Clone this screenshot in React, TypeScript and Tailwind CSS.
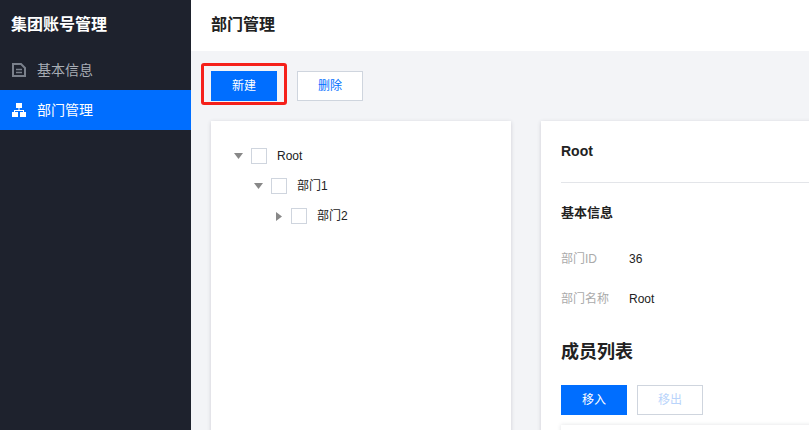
const font = '[font-family:"Liberation_Sans","Noto_Sans_CJK_SC",sans-serif]';

function Tree({ label, open, indent }: { label: string; open: boolean; indent: string }) {
  return (
    <div className={`flex h-[30px] items-center ${indent}`}>
      <span className="flex w-[17px] items-center">
        {open ? (
          <svg width="9" height="6" viewBox="0 0 9 6"><path d="M0 0h9L4.5 6z" fill="#888" /></svg>
        ) : (
          <svg width="6" height="9" viewBox="0 0 6 9" className="ml-[2px]"><path d="M0 0v9l6-4.5z" fill="#888" /></svg>
        )}
      </span>
      <span className="h-4 w-4 border border-[#cfd5de] bg-white" />
      <span className="ml-[10px] text-xs text-[#222]">{label}</span>
    </div>
  );
}

export default function App() {
  return (
    <div className={`relative flex h-[430px] w-[809px] overflow-hidden bg-[#f3f4f7] ${font}`}>
      {/* sidebar */}
      <aside className="w-[191px] shrink-0 bg-[#1e222d]">
        <div className="flex h-[50px] items-center pl-[11px] text-base font-bold text-white">集团账号管理</div>
        <div className="flex h-10 items-center pl-3 text-sm text-[#a8adb5]">
          <svg width="14" height="14" viewBox="0 0 14 14" fill="none" stroke="#7a808b" strokeWidth="2">
            <path d="M1 1h8l4 4v8H1z" />
            <path d="M4 6.5h6M4 9.5h6" strokeWidth="1.5" />
          </svg>
          <span className="ml-[11px]">基本信息</span>
        </div>
        <div className="flex h-10 items-center bg-[#006eff] pl-3 text-sm text-white">
          <svg width="14" height="14" viewBox="0 0 14 14" fill="#fff">
            <path d="M4 0h6v5H7.5v2H12v2h2v5H8V9h3V8H3v1h3v5H0V9h2V7h4.5V5H4z" />
          </svg>
          <span className="ml-[11px]">部门管理</span>
        </div>
      </aside>

      <main className="min-w-0 flex-1">
        <header className="flex h-[51px] items-center bg-white pb-[2px] pl-5 text-base font-bold text-[#222]">部门管理</header>

        <div className="flex gap-5 px-5 pt-5">
          <button className="h-[30px] w-[66px] bg-[#006eff] text-xs text-white">新建</button>
          <button className="h-[30px] w-[66px] border border-[#cfd5de] bg-white text-xs text-[#006eff]">删除</button>
        </div>

        <div className="mt-5 flex gap-[30px] pl-5">
          <section className="h-[400px] w-[300px] shrink-0 bg-white pl-[23px] pt-5 shadow-[0_1px_4px_rgba(54,58,80,0.2)]">
            <Tree label="Root" open indent="" />
            <Tree label="部门1" open indent="ml-5" />
            <Tree label="部门2" open={false} indent="ml-10" />
          </section>

          <section className="h-[400px] w-[400px] shrink-0 bg-white pl-5 shadow-[0_1px_4px_rgba(54,58,80,0.2)]">
            <div className="flex h-[62px] items-center border-b border-[#e3e5e9] pb-[2px] text-sm font-bold text-[#222]">Root</div>
            <h3 className="mt-[20px] text-[13px] font-bold leading-5 text-[#222]">基本信息</h3>
            <div className="mt-[26px] flex h-5 items-center text-xs">
              <span className="w-[68px] text-[#aaa]">部门ID</span>
              <span className="text-[#222]">36</span>
            </div>
            <div className="mt-5 flex h-5 items-center text-xs">
              <span className="w-[68px] text-[#aaa]">部门名称</span>
              <span className="text-[#222]">Root</span>
            </div>
            <h2 className="mt-[31px] text-lg font-bold leading-6 text-[#222]">成员列表</h2>
            <div className="mt-[21px] flex gap-[10px]">
              <button className="h-[30px] w-[66px] bg-[#006eff] text-xs text-white">移入</button>
              <button className="h-[30px] w-[66px] border border-[#cfd5de] bg-white text-xs text-[#b9d4fb]">移出</button>
            </div>
            <div className="mt-[10px] h-10 bg-white shadow-[0_0_4px_rgba(54,58,80,0.15)]" />
          </section>
        </div>
      </main>

      {/* red annotation box around the 新建 button */}
      <div className="pointer-events-none absolute left-[201px] top-[63px] h-[42px] w-[86px] rounded-[3px] border-[3px] border-[#f5201a]" />
    </div>
  );
}
